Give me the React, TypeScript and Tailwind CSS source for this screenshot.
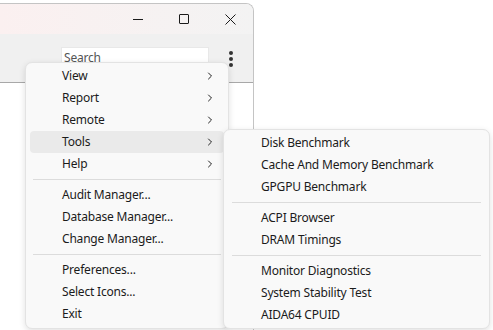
import { ChevronRight } from 'lucide-react'

const mainGroups = [
  ['View', 'Report', 'Remote', 'Tools', 'Help'],
  ['Audit Manager...', 'Database Manager...', 'Change Manager...'],
  ['Preferences...', 'Select Icons...', 'Exit'],
]

const toolGroups = [
  ['Disk Benchmark', 'Cache And Memory Benchmark', 'GPGPU Benchmark'],
  ['ACPI Browser', 'DRAM Timings'],
  ['Monitor Diagnostics', 'System Stability Test', 'AIDA64 CPUID'],
]

const Separator = ({ inset }: { inset: string }) => (
  <div className={`h-[9px] flex items-center ${inset}`}>
    <div className="h-px w-full bg-[#dcdcdc]" />
  </div>
)

const App = () => {
  return (
    <div
      className="relative w-[493px] h-[330px] overflow-hidden bg-white text-[12px] tracking-[-0.2px] text-[#1b1b1b]"
      style={{ fontFamily: '"Segoe UI", "Noto Sans", "Open Sans", sans-serif' }}
    >
      {/* app window */}
      <div className="mt-[3px] w-[254px] h-[327px] flex flex-col rounded-tr-[8px] border-t border-r border-[#c4c4c4] overflow-hidden">
        <div className="h-[30px] flex items-center justify-end bg-gradient-to-r from-[#fbf0f0] to-[#f3f3f3]">
          <div className="w-[46px] h-full flex items-center justify-center">
            <div className="w-[10px] h-px bg-[#1b1b1b]" />
          </div>
          <div className="w-[46px] h-full flex items-center justify-center">
            <div className="w-[10px] h-[10px] border border-[#1b1b1b] rounded-[1px]" />
          </div>
          <div className="w-[46px] h-full flex items-center justify-center">
            <svg width="11" height="11" viewBox="0 0 11 11" fill="none" stroke="#1b1b1b" strokeWidth="1">
              <path d="M0.5 0.5L10.5 10.5M10.5 0.5L0.5 10.5" />
            </svg>
          </div>
        </div>
        <div className="h-[49px] flex items-start bg-[#f0f0f0] border-b border-[#a8a8a8] pt-[13px]">
          <div className="ml-[61px] w-[148px] h-[22px] bg-white border border-[#e8e8e8] pl-[2px] text-[#555] leading-[20px]">Search</div>
          <div className="ml-[20px] mt-[4px] flex flex-col gap-[2.5px]">
            <div className="w-[3.5px] h-[3.5px] rounded-full bg-[#333]" />
            <div className="w-[3.5px] h-[3.5px] rounded-full bg-[#333]" />
            <div className="w-[3.5px] h-[3.5px] rounded-full bg-[#333]" />
          </div>
        </div>
        <div className="flex-1 bg-white" />
      </div>

      {/* main menu */}
      <div className="absolute left-[25px] top-[62px] w-[204px] pt-[2px] pb-[3px] bg-[#f9f9f9] border border-[#e3e3e3] rounded-[7px] shadow-[0_2px_6px_rgba(0,0,0,0.12)]">
        {mainGroups.map((group, gi) => (
          <div key={gi}>
            {gi > 0 && <Separator inset="px-[7px]" />}
            {group.map((item) => (
              <div
                key={item}
                className={`mx-[4px] h-[22px] flex items-center justify-between pl-[32px] pr-[8px] rounded-[4px] ${item === 'Tools' ? 'bg-[#eaeaea]' : ''}`}
              >
                <span>{item}</span>
                {gi === 0 && <ChevronRight size={12} strokeWidth={2} className="text-[#222]" />}
              </div>
            ))}
          </div>
        ))}
      </div>

      {/* tools submenu */}
      <div className="absolute left-[223px] top-[129px] w-[267px] py-[2px] bg-[#f9f9f9] border border-[#e3e3e3] rounded-[7px] shadow-[0_2px_6px_rgba(0,0,0,0.12)]">
        {toolGroups.map((group, gi) => (
          <div key={gi}>
            {gi > 0 && <Separator inset="px-[8px]" />}
            {group.map((item) => (
              <div key={item} className="mx-[4px] h-[22px] flex items-center pl-[33px]">
                {item}
              </div>
            ))}
          </div>
        ))}
      </div>
    </div>
  )
}

export default App
